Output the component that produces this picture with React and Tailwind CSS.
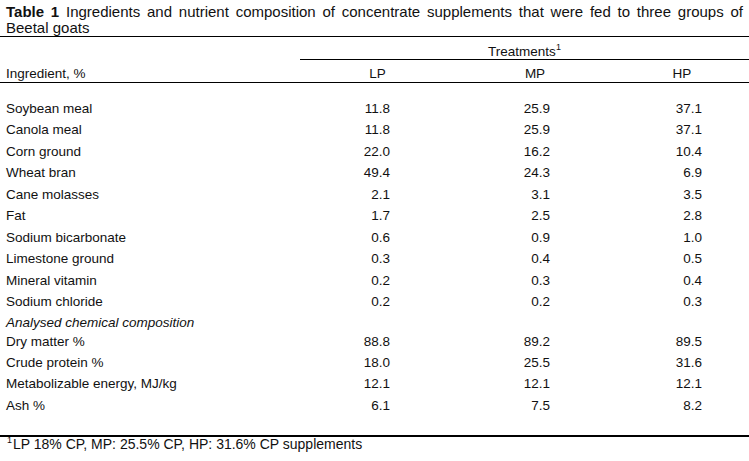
import React from "react";

const rows = [
  ["Soybean meal", "11.8", "25.9", "37.1"],
  ["Canola meal", "11.8", "25.9", "37.1"],
  ["Corn ground", "22.0", "16.2", "10.4"],
  ["Wheat bran", "49.4", "24.3", "6.9"],
  ["Cane molasses", "2.1", "3.1", "3.5"],
  ["Fat", "1.7", "2.5", "2.8"],
  ["Sodium bicarbonate", "0.6", "0.9", "1.0"],
  ["Limestone ground", "0.3", "0.4", "0.5"],
  ["Mineral vitamin", "0.2", "0.3", "0.4"],
  ["Sodium chloride", "0.2", "0.2", "0.3"],
];

const chem = [
  ["Dry matter %", "88.8", "89.2", "89.5", "h-[20px]"],
  ["Crude protein %", "18.0", "25.5", "31.6", "h-[21.5px]"],
  ["Metabolizable energy, MJ/kg", "12.1", "12.1", "12.1", "h-[21.5px]"],
  ["Ash %", "6.1", "7.5", "8.2", "h-[21.5px]"],
];

function Row({ cells, h = "h-[21.5px]" }) {
  return (
    <div className={`grid grid-cols-[300px_155px_160px_134px] ${h} items-center`}>
      <div className="pl-[6px]">{cells[0]}</div>
      <div className="text-right pr-[65px]">{cells[1]}</div>
      <div className="text-right pr-[65px]">{cells[2]}</div>
      <div className="text-right pr-[47px]">{cells[3]}</div>
    </div>
  );
}

export default function App() {
  return (
    <div
      className="w-[749px] h-[461px] bg-white text-[#111] text-[13.5px] leading-[15px] overflow-hidden"
      style={{ fontFamily: '"Liberation Sans", Arial, sans-serif' }}
    >
      <p className="pt-[4px] pb-[1px] pl-[6px] pr-[6px] text-justify text-[15px] leading-[15.5px]">
        <b>Table 1</b> Ingredients and nutrient composition of concentrate supplements that were fed to three groups of Beetal goats
      </p>
      <div className="border-t border-black">
        <div className="grid grid-cols-[300px_449px] h-[23px]">
          <div />
          <div className="border-b border-black flex items-end justify-center">
            <span>
              Treatments<sup className="text-[9px] relative -top-[6px]">1</sup>
            </span>
          </div>
        </div>
        <div className="grid grid-cols-[300px_155px_160px_134px] h-[23px] border-b border-black items-end pb-[1px]">
          <div className="pl-[6px]">Ingredient, %</div>
          <div className="text-center">LP</div>
          <div className="text-center">MP</div>
          <div className="text-center">HP</div>
        </div>
      </div>
      <div className="pt-[14.6px]">
        {rows.map((r) => (
          <Row key={r[0]} cells={r} />
        ))}
        <div className="h-[19px] flex items-center pl-[6px] italic">Analysed chemical composition</div>
        {chem.map((r) => (
          <Row key={r[0]} cells={r} h={r[4]} />
        ))}
      </div>
      <div className="mt-[19px] border-t-2 border-black pl-[7px] text-[14px]">
        <sup className="text-[9px] relative -top-[6px] mr-[1px]">1</sup>LP 18% CP, MP: 25.5% CP, HP: 31.6% CP supplements
      </div>
    </div>
  );
}
